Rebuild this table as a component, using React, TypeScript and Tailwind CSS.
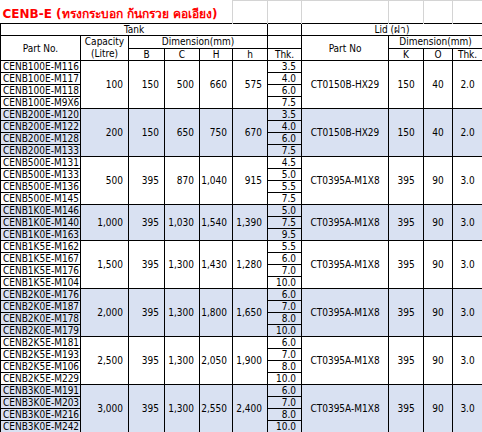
import React from 'react';

type Group = {
    parts: string[];
    cap: string;
    b: string;
    c: string;
    bigH: string;
    h: string;
    thk: string[];
    lid: string;
    k: string;
    o: string;
    lidThk: string;
};

const groups: Group[] = [
    { parts: ['CENB100E-M116', 'CENB100E-M117', 'CENB100E-M118', 'CENB100E-M9X6'], cap: '100', b: '150', c: '500', bigH: '660', h: '575', thk: ['3.5', '4.0', '6.0', '7.5'], lid: 'CT0150B-HX29', k: '150', o: '40', lidThk: '2.0' },
    { parts: ['CENB200E-M120', 'CENB200E-M122', 'CENB200E-M128', 'CENB200E-M133'], cap: '200', b: '150', c: '650', bigH: '750', h: '670', thk: ['3.5', '4.0', '6.0', '7.5'], lid: 'CT0150B-HX29', k: '150', o: '40', lidThk: '2.0' },
    { parts: ['CENB500E-M131', 'CENB500E-M133', 'CENB500E-M136', 'CENB500E-M145'], cap: '500', b: '395', c: '870', bigH: '1,040', h: '915', thk: ['4.5', '5.0', '5.5', '7.5'], lid: 'CT0395A-M1X8', k: '395', o: '90', lidThk: '3.0' },
    { parts: ['CENB1K0E-M146', 'CENB1K0E-M140', 'CENB1K0E-M163'], cap: '1,000', b: '395', c: '1,030', bigH: '1,540', h: '1,390', thk: ['5.0', '7.5', '9.5'], lid: 'CT0395A-M1X8', k: '395', o: '90', lidThk: '3.0' },
    { parts: ['CENB1K5E-M162', 'CENB1K5E-M167', 'CENB1K5E-M176', 'CENB1K5E-M104'], cap: '1,500', b: '395', c: '1,300', bigH: '1,430', h: '1,280', thk: ['5.5', '6.0', '7.0', '10.0'], lid: 'CT0395A-M1X8', k: '395', o: '90', lidThk: '3.0' },
    { parts: ['CENB2K0E-M176', 'CENB2K0E-M187', 'CENB2K0E-M178', 'CENB2K0E-M179'], cap: '2,000', b: '395', c: '1,300', bigH: '1,800', h: '1,650', thk: ['6.0', '7.0', '8.0', '10.0'], lid: 'CT0395A-M1X8', k: '395', o: '90', lidThk: '3.0' },
    { parts: ['CENB2K5E-M181', 'CENB2K5E-M193', 'CENB2K5E-M106', 'CENB2K5E-M229'], cap: '2,500', b: '395', c: '1,300', bigH: '2,050', h: '1,900', thk: ['6.0', '7.0', '8.0', '10.0'], lid: 'CT0395A-M1X8', k: '395', o: '90', lidThk: '3.0' },
    { parts: ['CENB3K0E-M191', 'CENB3K0E-M203', 'CENB3K0E-M216', 'CENB3K0E-M242'], cap: '3,000', b: '395', c: '1,300', bigH: '2,550', h: '2,400', thk: ['6.0', '7.0', '8.0', '10.0'], lid: 'CT0395A-M1X8', k: '395', o: '90', lidThk: '3.0' },
];

const widths = [80, 48, 36, 35, 33, 35, 34, 87, 35, 29, 30];

const cell = 'border border-black h-[12px] p-0 leading-[11px] whitespace-nowrap';
const grid = 'border-t border-x border-b-0 border-[#d4d4d4] p-0';

export default function App() {
    return (
        <div className="w-[482px] bg-white text-black text-[10px]" style={{ fontFamily: 'Tahoma, "DejaVu Sans Condensed", "DejaVu Sans", sans-serif' }}>
            <table className="w-[482px] table-fixed border-collapse">
                <colgroup>
                    {widths.map((w, i) => (
                        <col key={i} style={{ width: w }} />
                    ))}
                </colgroup>
                <tbody>
                    <tr>
                        <td colSpan={5} className="h-[23px] p-0 pl-[2px] pb-[1px] align-bottom whitespace-nowrap overflow-visible">
                            <span className="text-[12px] font-bold text-[#ff0000] leading-[14px]" style={{ fontFamily: 'Tahoma, "DejaVu Sans", sans-serif' }}>
                                CENB-E (ทรงกระบอก ก้นกรวย คอเอียง)
                            </span>
                        </td>
                        <td className={grid} />
                        <td className={grid} />
                        <td className={grid} />
                        <td className={grid} />
                        <td className={grid} />
                        <td className={grid} />
                    </tr>

                    <tr>
                        <td colSpan={6} className={`${cell} text-center`}>Tank</td>
                        <td className={cell} />
                        <td colSpan={4} className={`${cell} text-center`}>Lid (ฝา)</td>
                    </tr>
                    <tr>
                        <td rowSpan={2} className={`${cell} text-center`}>Part No.</td>
                        <td rowSpan={2} className={`${cell} text-center leading-[12px]`}>
                            Capacity
                            <br />
                            (Litre)
                        </td>
                        <td colSpan={4} className={`${cell} text-center`}>Dimension(mm)</td>
                        <td className={cell} />
                        <td rowSpan={2} className={`${cell} text-center`}>Part No</td>
                        <td colSpan={3} className={`${cell} text-center`}>Dimension(mm)</td>
                    </tr>
                    <tr>
                        <td className={`${cell} text-center`}>B</td>
                        <td className={`${cell} text-center`}>C</td>
                        <td className={`${cell} text-center`}>H</td>
                        <td className={`${cell} text-center`}>h</td>
                        <td className={`${cell} text-center`}>Thk.</td>
                        <td className={`${cell} text-center`}>K</td>
                        <td className={`${cell} text-center`}>O</td>
                        <td className={`${cell} text-center`}>Thk.</td>
                    </tr>

                    {groups.map((g, gi) => {
                        const bg = gi % 2 === 1 ? 'bg-[#d9e1f2]' : 'bg-white';
                        const n = g.parts.length;
                        return g.parts.map((p, ri) => (
                            <tr key={p + gi} className={bg}>
                                <td className={`${cell} pl-[2px] text-left`}>{p}</td>
                                {ri === 0 && (
                                    <>
                                        <td rowSpan={n} className={`${cell} pr-[5px] text-right`}>{g.cap}</td>
                                        <td rowSpan={n} className={`${cell} pr-[5px] text-right`}>{g.b}</td>
                                        <td rowSpan={n} className={`${cell} pr-[5px] text-right`}>{g.c}</td>
                                        <td rowSpan={n} className={`${cell} pr-[5px] text-right`}>{g.bigH}</td>
                                        <td rowSpan={n} className={`${cell} pr-[5px] text-right`}>{g.h}</td>
                                    </>
                                )}
                                <td className={`${cell} pr-[5px] text-right`}>{g.thk[ri]}</td>
                                {ri === 0 && (
                                    <>
                                        <td rowSpan={n} className={`${cell} text-center`}>{g.lid}</td>
                                        <td rowSpan={n} className={`${cell} text-center`}>{g.k}</td>
                                        <td rowSpan={n} className={`${cell} text-center`}>{g.o}</td>
                                        <td rowSpan={n} className={`${cell} text-center`}>{g.lidThk}</td>
                                    </>
                                )}
                            </tr>
                        ));
                    })}
                </tbody>
            </table>
        </div>
    );
}
